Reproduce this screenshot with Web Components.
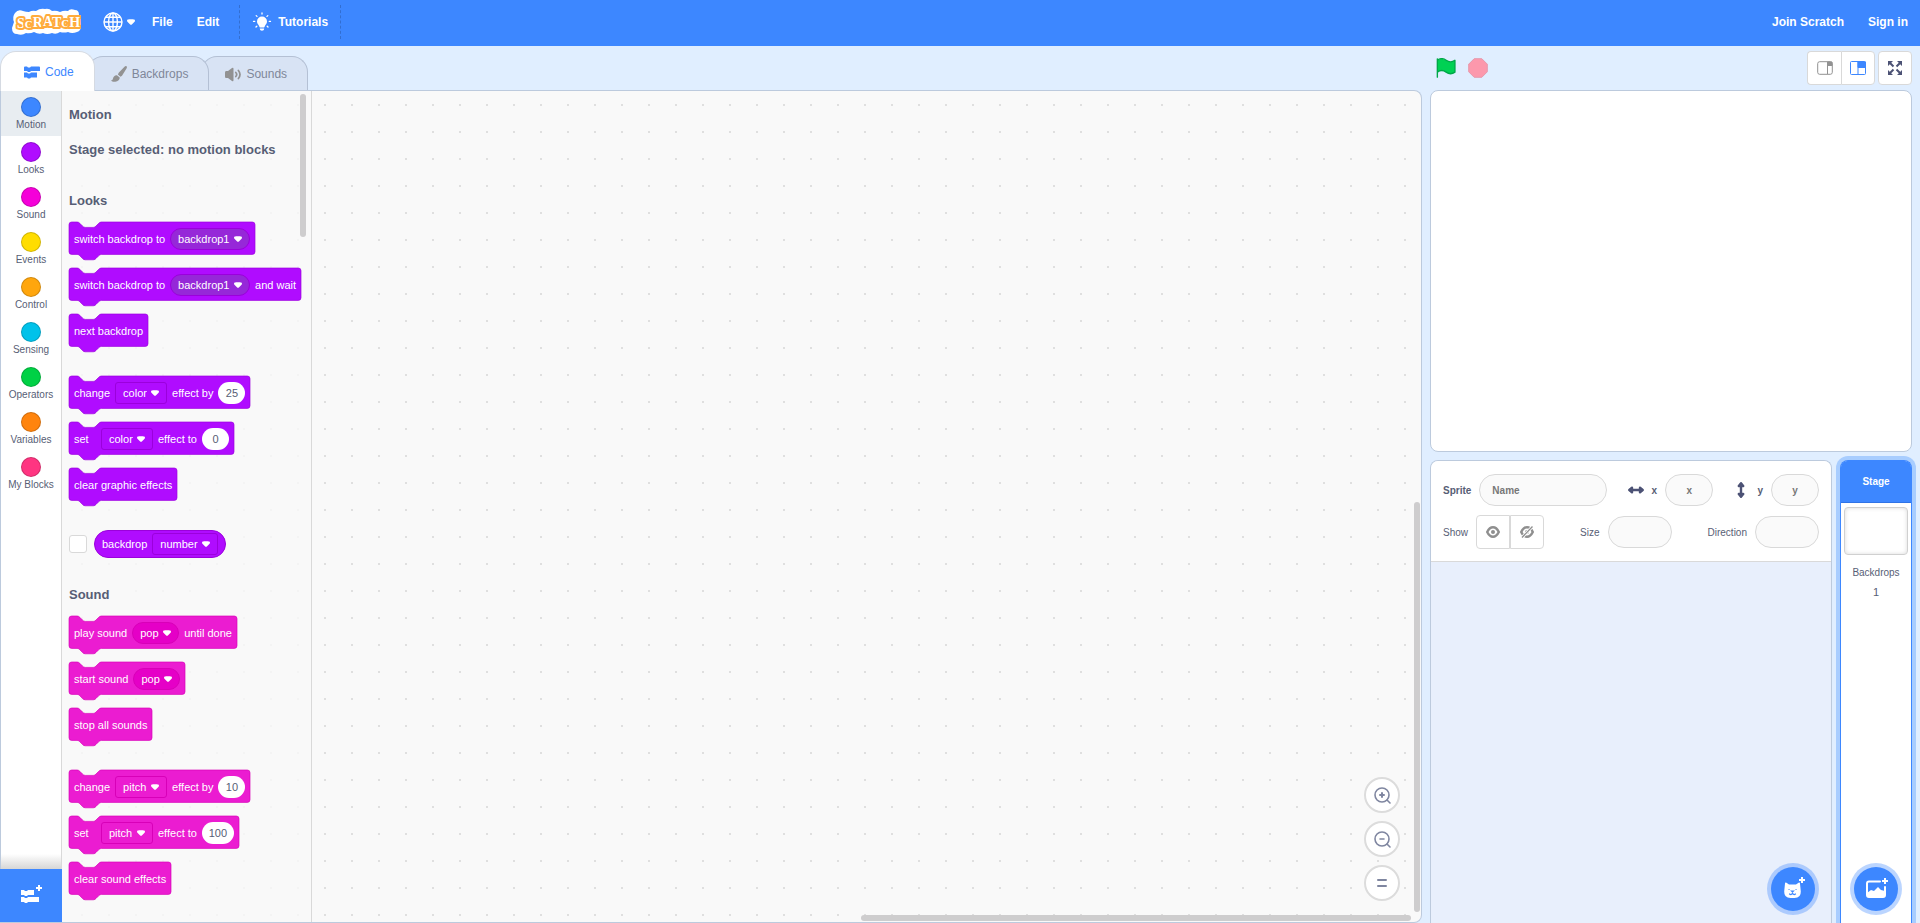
<!DOCTYPE html>
<html lang="en">
<head>
<meta charset="utf-8">
<title>Scratch - Editor</title>
<style>
  :root {
    --blue: #3d87ff;
    --text: #575e75;
    --line: #d9d9d9;
    --edge: #bccadd;
    --pane: #e0eeff;
  }
  body {
    margin: 0;
    font-family: "Liberation Sans", Arial, sans-serif;
    color: var(--text);
  }
</style>
</head>
<body>
<scratch-app></scratch-app>

<script>
const CARET = `<svg class="caret" viewBox="0 0 12.71 8.79" width="8" height="6" fill="#fff" aria-hidden="true"><path d="M12.71,2.44A2.41,2.41,0,0,1,12,4.16L8.08,8.08a2.45,2.45,0,0,1-3.45,0L0.72,4.16A2.42,2.42,0,0,1,0,2.44,2.48,2.48,0,0,1,.71.71C1,0.47,1.43,0,6.36,0S11.75,0.46,12,.71A2.44,2.44,0,0,1,12.71,2.44Z"/></svg>`;

function define(name, html, setup) {
  const template = document.createElement("template");
  template.innerHTML = html;
  customElements.define(name, class extends HTMLElement {
    constructor() {
      super();
      this.attachShadow({ mode: "open" }).appendChild(template.content.cloneNode(true));
    }
    connectedCallback() {
      if (setup) setup(this, this.shadowRoot);
    }
  });
}

/* ---------- blocks ---------- */

define("block-menu", `
  <style>
    :host { display: inline-grid; align-items: center; height: 22px; }
    select {
      grid-area: 1 / 1;
      appearance: none;
      height: 22px;
      margin: 0;
      padding: 0 19px 0 7px;
      border: 1px solid var(--block-line);
      border-radius: 3px;
      background: transparent;
      color: #fff;
      font: 11px "Liberation Sans", Arial, sans-serif;
    }
    :host([round]) select { border-radius: 11px; background: var(--block-field); }
    .caret { grid-area: 1 / 1; justify-self: end; margin-right: 8px; pointer-events: none; }
  </style>
  <select><option></option></select>${CARET}
`, (host, root) => {
  root.querySelector("option").textContent = host.getAttribute("value");
  root.querySelector("select").setAttribute("aria-label", host.getAttribute("value"));
});

define("block-number", `
  <style>
    :host { display: inline-flex; }
    input {
      box-sizing: border-box;
      min-width: 27px;
      height: 22px;
      padding: 0;
      border: 0;
      border-radius: 11px;
      background: #fff;
      color: #575e75;
      text-align: center;
      font: 11px "Liberation Sans", Arial, sans-serif;
    }
  </style>
  <input type="text" aria-label="value">
`, (host, root) => {
  const input = root.querySelector("input");
  input.value = host.getAttribute("value");
  input.style.width = `${input.value.length * 6 + 14}px`;
});

define("stack-block", `
  <style>
    :host {
      position: relative;
      display: flex;
      align-items: center;
      gap: 5px;
      width: max-content;
      height: 33px;
      padding: 0 5px;
      margin-bottom: 13px;
      color: #fff;
      font-size: 11px;
      white-space: nowrap;
    }
    :host([last]) { margin-bottom: 29px; }
    .shape { position: absolute; left: 0; top: 0; overflow: visible; }
    ::slotted(*) { position: relative; }
    ::slotted(span) { min-width: 22px; }
    path { fill: var(--block); stroke: var(--block-line); }
  </style>
  <svg class="shape" height="39" aria-hidden="true"><path transform="scale(.675)"/></svg>
  <slot></slot>
`, (host, root) => {
  const draw = () => {
    // the outline is drawn in block units, 0.675px each
    const right = host.offsetWidth / 0.675 - 4;
    root.querySelector(".shape").setAttribute("width", host.offsetWidth);
    root.querySelector("path").setAttribute("d",
      `m 0,4 A 4,4 0 0,1 4,0 H 12 c 2,0 3,1 4,2 l 4,4 c 1,1 2,2 4,2 h 12 c 2,0 3,-1 4,-2 l 4,-4 c 1,-1 2,-2 4,-2
       H ${right} a 4,4 0 0,1 4,4 v 40 a 4,4 0 0,1 -4,4 H 48 c -2,0 -3,1 -4,2 l -4,4 c -1,1 -2,2 -4,2
       h -12 c -2,0 -3,-1 -4,-2 l -4,-4 c -1,-1 -2,-2 -4,-2 H 4 a 4,4 0 0,1 -4,-4 z`);
  };
  new ResizeObserver(draw).observe(host);
});

define("reporter-block", `
  <style>
    :host { display: flex; align-items: center; gap: 7px; margin-bottom: 29px; }
    input {
      appearance: none;
      box-sizing: border-box;
      width: 18px;
      height: 18px;
      margin: 0;
      border: 1px solid var(--line);
      border-radius: 3px;
      background: #fff;
    }
    .pill {
      display: flex;
      align-items: center;
      gap: 5px;
      box-sizing: border-box;
      height: 28px;
      padding: 0 7px;
      border: 1px solid var(--block-line);
      border-radius: 14px;
      background: var(--block);
      color: #fff;
      font-size: 11px;
    }
  </style>
  <input type="checkbox" aria-label="Show on stage">
  <div class="pill"><slot></slot></div>
`);

define("block-palette", `
  <style>
    :host {
      position: relative;
      display: block;
      flex: none;
      box-sizing: border-box;
      width: 250px;
      padding: 16px 0 0 7px;
      border-right: 1px solid var(--line);
      background: rgba(249, 249, 249, .8);
      overflow: hidden;
    }
    h2 { margin: 0 0 13px; font-size: 13px; line-height: 16px; height: 16px; }
    h2.first { margin-bottom: 19px; }
    h2.note { margin-bottom: 35px; }
    .looks { --block: #b00cff; --block-line: #9b00dc; --block-field: #9628d8; }
    .sound { --block: #eb1cd1; --block-line: #d800b8; --block-field: #e500c7; }
    .bar {
      position: absolute;
      right: 5px;
      top: 3px;
      width: 6px;
      height: 143px;
      border-radius: 3px;
      background: #cecdce;
    }
  </style>
  <h2 class="first">Motion</h2>
  <h2 class="note">Stage selected: no motion blocks</h2>
  <section class="looks">
    <h2>Looks</h2>
    <stack-block><span>switch backdrop to</span><block-menu round value="backdrop1"></block-menu></stack-block>
    <stack-block><span>switch backdrop to</span><block-menu round value="backdrop1"></block-menu><span>and wait</span></stack-block>
    <stack-block last><span>next backdrop</span></stack-block>
    <stack-block><span>change</span><block-menu value="color"></block-menu><span>effect by</span><block-number value="25"></block-number></stack-block>
    <stack-block><span>set</span><block-menu value="color"></block-menu><span>effect to</span><block-number value="0"></block-number></stack-block>
    <stack-block last><span>clear graphic effects</span></stack-block>
    <reporter-block><span>backdrop</span><block-menu value="number"></block-menu></reporter-block>
  </section>
  <section class="sound">
    <h2>Sound</h2>
    <stack-block><span>play sound</span><block-menu round value="pop"></block-menu><span>until done</span></stack-block>
    <stack-block><span>start sound</span><block-menu round value="pop"></block-menu></stack-block>
    <stack-block last><span>stop all sounds</span></stack-block>
    <stack-block><span>change</span><block-menu value="pitch"></block-menu><span>effect by</span><block-number value="10"></block-number></stack-block>
    <stack-block><span>set</span><block-menu value="pitch"></block-menu><span>effect to</span><block-number value="100"></block-number></stack-block>
    <stack-block last><span>clear sound effects</span></stack-block>
  </section>
  <div class="bar"></div>
`);

/* ---------- menu bar ---------- */

define("menu-bar", `
  <style>
    :host { display: flex; height: 46px; background: var(--blue); color: #fff; flex: none; }
    a, button {
      display: flex;
      align-items: center;
      padding: 0 12px 2px;
      border: 0;
      background: none;
      color: #fff;
      font: bold 12px "Liberation Sans", Arial, sans-serif;
      text-decoration: none;
    }
    .logo { padding: 0 10px 2px 12px; }
    .lang { gap: 4px; padding-right: 5px; }
    .tips { gap: 6px; }
    .rule { margin: 5px 0 7px; border-left: 1px dashed rgba(0, 0, 0, .18); }
    .rule.first { margin-left: 8px; }
    .account { display: flex; margin-left: auto; }
    .letters {
      font: bold 14px "Liberation Serif", serif;
      fill: #fff;
      stroke: #ffab3c;
      stroke-width: 4;
      stroke-linejoin: round;
      paint-order: stroke;
    }
    .low { font-size: 11px; }
  </style>
  <a class="logo" href="#" aria-label="Scratch">
    <svg width="69" height="28" viewBox="0 0 69 28">
      <path fill="#fff" d="M3 5Q6 1 11 3Q14 4 17 4Q20 2 24 3Q28 0 33 1Q37 0 40 3Q44 2 48 4Q52 2 56 3Q58 0 63 2Q67 2 67 7L69 18Q69 23 65 24Q60 26 56 24Q52 25 48 24Q44 27 40 25Q35 27 31 25Q27 27 22 24Q18 26 14 25Q10 28 5 26Q0 26 0 20L2 14Q0 9 3 5Z"/>
      <text class="letters" x="5" y="20">S<tspan class="low">C</tspan><tspan dy="-1">R</tspan><tspan dy="-1">A</tspan><tspan dy="1">T</tspan><tspan class="low">C</tspan><tspan dy="0">H</tspan></text>
    </svg>
  </a>
  <button class="lang" aria-label="Language">
    <svg width="20" height="20" viewBox="0 0 20 20" fill="none" stroke="#fff" stroke-width="1.4">
      <circle cx="10" cy="10" r="9"/><ellipse cx="10" cy="10" rx="4.4" ry="9"/>
      <path d="M10 1v18M1 10h18M2.5 5.2h15M2.5 14.8h15"/>
    </svg>
    ${CARET}
  </button>
  <button>File</button>
  <button>Edit</button>
  <span class="rule first"></span>
  <button class="tips">
    <svg width="20" height="20" viewBox="0 0 20 20" fill="#fff">
      <path d="M10 4.6a5 5 0 0 1 5 5c0 2.2-1.5 3-2.2 4.6-.3.8-.5 1.3-1.3 1.3h-3c-.8 0-1-.5-1.3-1.3C6.5 12.600 5 11.800 5 9.600a5 5 0 0 1 5-5z"/>
      <path d="M7.800 16.600h4.400c0 3-4.400 3-4.400 0z"/>
      <path fill="none" stroke="#fff" stroke-width="1.3" stroke-linecap="round" d="M10 1v1M4.200 3.600l.8.8M15.800 3.600l-.8.8M1.500 9.400h1.200M17.300 9.400h1.200M4 15l.8-.8M16 15l-.8-.8"/>
    </svg>
    Tutorials
  </button>
  <span class="rule"></span>
  <div class="account"><a href="#">Join Scratch</a><a href="#">Sign in</a></div>
`);

/* ---------- tabs ---------- */

define("editor-tab", `
  <style>
    :host { display: flex; height: 34px; margin-left: -8px; position: relative; }
    button {
      display: flex;
      align-items: center;
      gap: 5px;
      padding: 0 20px 0 23px;
      border: 1px solid #b4c0d4;
      border-bottom: 0;
      border-radius: 16px 16px 0 0;
      background: #d8e3f4;
      color: #7f8799;
      font: 12px "Liberation Sans", Arial, sans-serif;
    }
    :host([active]) { height: 40px; margin-left: 0; margin-bottom: -1px; }
    :host([active]) button { border-color: #d5dae2; background: #fff; color: var(--blue); }
  </style>
  <button role="tab"><slot name="icon"></slot><slot></slot></button>
`);

/* ---------- categories ---------- */

define("category-item", `
  <style>
    :host { display: block; }
    button {
      display: flex;
      flex-direction: column;
      align-items: center;
      gap: 2px;
      width: 100%;
      height: 45px;
      padding: 6px 0 0;
      border: 0;
      background: none;
      color: var(--text);
      font: 10px/11px "Liberation Sans", Arial, sans-serif;
      white-space: nowrap;
    }
    :host([active]) button { background: #e8edf1; }
    i { box-sizing: border-box; flex: none; width: 20px; height: 20px; border-radius: 50%; border: 1px solid rgba(0, 0, 0, .18); }
  </style>
  <button><i></i><slot></slot></button>
`, (host, root) => {
  root.querySelector("i").style.background = host.getAttribute("color");
});

define("category-list", `
  <style>
    :host {
      display: flex;
      flex-direction: column;
      flex: none;
      width: 60px;
      border-left: 1px solid var(--edge);
      border-right: 1px solid var(--line);
      background: #fff;
    }
    .fade { height: 15px; margin-top: auto; background: linear-gradient(#fff, #d6d6d6); }
    .add {
      position: relative;
      display: flex;
      align-items: center;
      justify-content: center;
      height: 53px;
      padding: 0 0 4px;
      margin: 0 -1px;
      border: 0;
      background: var(--blue);
    }
  </style>
  <category-item active color="#3d87ff">Motion</category-item>
  <category-item color="#b00cff">Looks</category-item>
  <category-item color="#f500d9">Sound</category-item>
  <category-item color="#ffdd00">Events</category-item>
  <category-item color="#ffa60d">Control</category-item>
  <category-item color="#00c2ea">Sensing</category-item>
  <category-item color="#00d145">Operators</category-item>
  <category-item color="#ff840d">Variables</category-item>
  <category-item color="#ff3581">My Blocks</category-item>
  <div class="fade"></div>
  <button class="add" aria-label="Add Extension">
    <svg width="22" height="20" viewBox="0 0 22 20" fill="#fff">
      <path d="M1 6h3l1 1h2l1-1h6v5H8l-1 1H5l-1-1H1zM1 13h3l1 1h2l1-1h11v5H8l-1 1H5l-1-1H1zM18 1h2v2h2v2h-2v2h-2V5h-2V3h2z"/>
    </svg>
  </button>
`);

/* ---------- code area ---------- */

define("code-area", `
  <style>
    :host { position: relative; display: block; flex: 1; }
    .zoom { position: absolute; right: 21px; bottom: 21px; display: grid; gap: 8px; }
    button {
      display: grid;
      place-items: center;
      box-sizing: border-box;
      width: 36px;
      height: 36px;
      padding: 0;
      border: 2px solid #dcdcdc;
      border-radius: 50%;
      background: #fff;
    }
    svg { fill: none; stroke: #7f86a0; stroke-width: 1.6; stroke-linecap: round; }
    .bar { position: absolute; border-radius: 3px; background: #cecdce; }
    .down { right: 1px; top: calc(50% - 5px); bottom: 10px; width: 6px; }
    .across { right: 10px; bottom: 1px; width: 550px; height: 6px; }
  </style>
  <div class="zoom">
    <button aria-label="Zoom in"><svg width="20" height="20" viewBox="0 0 20 20"><circle cx="10" cy="10" r="7"/><path stroke-width="2" d="M10 8v4M8 10h4"/><path d="M15 15l3 3"/></svg></button>
    <button aria-label="Zoom out"><svg width="20" height="20" viewBox="0 0 20 20"><circle cx="10" cy="10" r="7"/><path d="M8 10h4M15 15l3 3"/></svg></button>
    <button aria-label="Reset zoom"><svg width="20" height="20" viewBox="0 0 20 20"><path stroke-width="2" d="M6 7h8M6 13h8"/></svg></button>
  </div>
  <div class="bar down"></div>
  <div class="bar across"></div>
`);

define("code-editor", `
  <style>
    :host { display: flex; flex-direction: column; flex: 1; min-width: 0; padding-top: 5px; }
    .tabs { display: flex; align-items: flex-end; height: 39px; }
    .tabs editor-tab:nth-child(1) { z-index: 3; }
    .tabs editor-tab:nth-child(2) { z-index: 2; }
    .body {
      display: flex;
      flex: 1;
      border: 1px solid var(--edge);
      border-left: 0;
      border-radius: 0 8px 8px 0;
      overflow: hidden;
      background: radial-gradient(circle at 14px 14px, #dfdfdf 1px, transparent 1px) 14px 0 / 27px 27px #f9f9f9;
    }
  </style>
  <div class="tabs" role="tablist">
    <editor-tab active>
      <svg slot="icon" width="16" height="16" viewBox="0 0 16 16" fill="#3d87ff"><path d="M0 3.500q0-1 1-1h2l1 1h2l1-1h8q1 0 1 1v3.500H7L6 8H4L3 7H0zM0 8.500h3l1 1h2l1-1h6v5H7l-1 1H4l-1-1H0z"/></svg>Code
    </editor-tab>
    <editor-tab>
      <svg slot="icon" width="16" height="16" viewBox="0 0 16 16" fill="#929292"><path d="M15.500.3c.7.6.4 1.500 0 2.200L11 9.800l-1.500 1-2.600-2.300.8-1.700L13.500.7c.7-.6 1.400-.9 2-.4zM6 9.300l2.700 2.300c.2 3-3 4.200-5.200 4.200-1.500 0-3-.5-3.500-1.500 1 .2 1.500-.3 1.900-1.500C2.500 10.500 4 9 6 9.300z"/></svg>Backdrops
    </editor-tab>
    <editor-tab>
      <svg slot="icon" width="16" height="16" viewBox="0 0 16 16" fill="#929292"><path d="M0 6.500q0-1.500 1-1.500h2l4-3q1.500-1 1.500 1v11q0 2-1.500 1l-4-3H1q-1 0-1-1.500z"/><path fill="none" stroke="#929292" stroke-width="1.700" stroke-linecap="round" d="M10.800 6.500q1.800 2 0 4M13.400 4.500q3.200 4 0 8"/></svg>Sounds
    </editor-tab>
  </div>
  <div class="body">
    <category-list></category-list>
    <block-palette></block-palette>
    <code-area></code-area>
  </div>
`);

/* ---------- stage ---------- */

define("stage-view", `
  <style>
    :host { display: block; }
    .head { display: flex; align-items: center; height: 44px; padding: 0 0 0 6px; }
    button { display: grid; place-items: center; box-sizing: border-box; padding: 0; border: 0; background: none; }
    .run { width: 20px; height: 20px; margin-right: 12px; }
    .size { width: 34px; height: 34px; border: 1px solid var(--line); background: #fff; }
    .small { margin-left: auto; border-right: 0; border-radius: 4px 0 0 4px; }
    .large { border-radius: 0 4px 4px 0; }
    .full { margin-left: 3px; border-radius: 4px; }
    .canvas { height: 360px; border: 1px solid var(--edge); border-radius: 8px; background: #fff; }
  </style>
  <div class="head">
    <button class="run" aria-label="Go"><svg width="20" height="20" viewBox="0 0 16.63 17.5" fill="#00d153" stroke="#00a848" stroke-width="1.2" stroke-linecap="round" stroke-linejoin="round"><path d="M.75 2A6.44 6.44 0 0 1 8.44 2a6.44 6.44 0 0 0 7.69 0V12.4a6.44 6.44 0 0 1-7.69 0 6.44 6.44 0 0 0-7.69 0M.75 16.75V.75"/></svg></button>
    <button class="run" aria-label="Stop"><svg width="20" height="20" viewBox="0 0 14 14" fill="#fc98ac" stroke="#e698ab" stroke-width=".7"><path d="M4.3.5h5.400l3.800 3.800v5.400l-3.800 3.800H4.300L.5 9.700V4.300z"/></svg></button>
    <button class="size small" aria-label="Small stage"><svg width="16" height="14" viewBox="0 0 16 14" fill="none" stroke="#929292"><rect x=".7" y=".7" width="14.600" height="12.600" rx="2"/><path d="M10.500 1v12"/><path fill="#929292" d="M10.500 1h4.500v3.500h-4.500z"/></svg></button>
    <button class="size large" aria-label="Large stage"><svg width="16" height="14" viewBox="0 0 16 14" fill="none" stroke="#3d87ff"><rect x=".5" y=".5" width="15" height="13" rx="1"/><path d="M8 1v12"/><path fill="#3d87ff" d="M8 1h7.500v5.500H8z"/></svg></button>
    <button class="size full" aria-label="Full screen"><svg width="14" height="14" viewBox="0 0 14 14" fill="#4c5275" stroke="#4c5275"><path stroke-width="2" d="M2 2l3.500 3.500M12 2L8.500 5.500M2 12l3.500-3.500M12 12L8.500 8.500"/><path stroke="none" d="M0 0h5L0 5zM14 0v5L9 0zM0 14V9L5 14zM14 14H9L14 9z"/></svg></button>
  </div>
  <div class="canvas"></div>
`);

define("add-button", `
  <style>
    :host { display: block; }
    button {
      display: grid;
      place-items: center;
      width: 44px;
      height: 44px;
      padding: 0;
      border: 0;
      border-radius: 50%;
      background: var(--blue);
      box-shadow: 0 0 0 4px rgba(61, 135, 255, .35);
    }
  </style>
  <button><slot></slot></button>
`, (host, root) => {
  root.querySelector("button").setAttribute("aria-label", host.getAttribute("label"));
});

define("sprite-pane", `
  <style>
    :host {
      position: relative;
      display: block;
      flex: 1;
      border: 1px solid var(--edge);
      border-bottom: 0;
      border-radius: 8px 8px 0 0;
      overflow: hidden;
      background: #e8effc;
    }
    .info { display: grid; gap: 8px; padding: 12px; border-bottom: 1px solid var(--line); background: #fff; }
    .row { display: flex; justify-content: space-between; height: 34px; }
    .group { display: flex; align-items: center; gap: 8px; font-size: 10px; }
    .strong { font-weight: bold; }
    input {
      box-sizing: border-box;
      width: 48px;
      height: 32px;
      padding: 0;
      border: 1px solid var(--line);
      border-radius: 16px;
      background: #fafafa;
      color: var(--text);
      text-align: center;
      font: bold 10px "Liberation Sans", Arial, sans-serif;
    }
    input::placeholder { color: #777; opacity: 1; }
    .name { width: 128px; padding-left: 12px; text-align: left; }
    .mid { width: 64px; }
    .eyes { display: flex; }
    .eyes button {
      display: grid;
      place-items: center;
      box-sizing: border-box;
      width: 34px;
      height: 34px;
      padding: 0;
      border: 1px solid var(--line);
      border-radius: 4px 0 0 4px;
      background: #fff;
    }
    .eyes button + button { border-radius: 0 4px 4px 0; }
    add-button { position: absolute; right: 16px; bottom: 12px; }
  </style>
  <div class="info">
    <div class="row">
      <div class="group strong"><label for="name">Sprite</label><input id="name" class="name" placeholder="Name"></div>
      <div class="group strong">
        <svg width="16" height="12" viewBox="0 0 16 12" fill="none" stroke="#4c5275" stroke-width="2.4" stroke-linecap="round" stroke-linejoin="round"><path d="M2 6h12"/><path fill="#4c5275" d="M4 3.800L1.300 6 4 8.200zM12 3.800L14.700 6 12 8.200z"/></svg>
        <label for="x">x</label><input id="x" placeholder="x">
      </div>
      <div class="group strong">
        <svg width="16" height="16" viewBox="-2 0 16 16" fill="none" stroke="#4c5275" stroke-width="2.4" stroke-linecap="round" stroke-linejoin="round"><path d="M6 2v12"/><path fill="#4c5275" d="M3.800 4L6 1.300 8.200 4zM3.800 12L6 14.700 8.200 12z"/></svg>
        <label for="y">y</label><input id="y" placeholder="y">
      </div>
    </div>
    <div class="row">
      <div class="group"><span>Show</span>
        <div class="eyes">
          <button aria-label="Show sprite"><svg width="14" height="12" viewBox="0 0 14 12" fill="none" stroke="#8f8f8f" stroke-width="2.4"><path d="M1.200 6q2.300-4.800 5.800-4.800t5.800 4.800q-2.300 4.800-5.800 4.800T1.200 6z"/><circle cx="7" cy="6" r="2" fill="#8f8f8f" stroke="none"/></svg></button>
          <button aria-label="Hide sprite"><svg width="14" height="12" viewBox="0 0 14 12" fill="none" stroke="#8f8f8f" stroke-width="2.4"><path d="M1.200 6q2.300-4.800 5.800-4.800t5.800 4.800q-2.300 4.800-5.800 4.800T1.200 6z"/><circle cx="7" cy="6" r="2" fill="#8f8f8f" stroke="none"/><path stroke="#fff" stroke-width="3" d="M2 11.500L12.500.5"/><path stroke-width="1.3" d="M2 11.500L12.500.5"/></svg></button>
        </div>
      </div>
      <div class="group"><label for="size">Size</label><input id="size" class="mid"></div>
      <div class="group"><label for="direction">Direction</label><input id="direction" class="mid"></div>
    </div>
  </div>
  <add-button label="Choose a Sprite">
    <svg width="24" height="24" viewBox="0 0 24 24" fill="#fff"><path d="M4 6.500q0-1.500 1.500-.8L8 7.600h7l2.500-1.900Q19 5 19 6.500l.8 8q.2 6.500-6.300 6.500h-4Q3 21 3.200 14.500z"/><path d="M20 0h2v2h2v2h-2v2h-2V4h-2V2h2z"/><path fill="none" stroke="#3d87ff" stroke-width="1.200" stroke-linecap="round" d="M8 12.500h.1M15 12.500h.1M10.500 14h2l-1 1zM8.500 17q2 1.500 3-1 1 2.500 3 1"/></svg>
  </add-button>
`);

define("stage-selector", `
  <style>
    :host {
      position: relative;
      display: flex;
      flex-direction: column;
      align-items: center;
      box-sizing: border-box;
      width: 72px;
      border: 1px solid var(--blue);
      border-bottom: 0;
      border-radius: 8px 8px 0 0;
      background: #fff;
      box-shadow: 0 0 0 4px #a8cdff;
      font-size: 10px;
    }
    .head {
      align-self: stretch;
      box-sizing: border-box;
      height: 42px;
      border-bottom: 1px solid #2f73e6;
      border-radius: 6px 6px 0 0;
      background: var(--blue);
      color: #fff;
      font-weight: bold;
      line-height: 42px;
      text-align: center;
    }
    .thumb {
      box-sizing: border-box;
      width: 64px;
      height: 48px;
      margin: 4px 0 12px;
      border: 1px solid #d0d0d0;
      border-radius: 4px;
      box-shadow: inset 0 0 4px rgba(0, 0, 0, .15);
    }
    .count { margin-top: 8px; font-size: 11px; }
    add-button { position: absolute; bottom: 12px; }
  </style>
  <div class="head">Stage</div>
  <div class="thumb"></div>
  <div>Backdrops</div>
  <div class="count">1</div>
  <add-button label="Choose a Backdrop">
    <svg width="24" height="24" viewBox="0 0 24 24" fill="none"><path stroke="#fff" stroke-width="2" stroke-linecap="round" d="M16 4.500H5Q3 4.500 3 6.500V18q0 2 2 2h14q2 0 2-2v-8"/><path fill="#fff" d="M3 16l4-3 3 1 4-4 3 3 4 1v6H3zM20 1h2v2h2v2h-2v2h-2V5h-2V3h2z"/></svg>
  </add-button>
`);

define("scratch-app", `
  <style>
    :host { display: flex; flex-direction: column; height: 100vh; overflow: hidden; background: var(--pane); }
    main { display: flex; flex: 1; gap: 8px; min-height: 0; padding-right: 8px; }
    aside { display: flex; flex-direction: column; flex: none; width: 482px; }
    .targets { display: flex; flex: 1; gap: 8px; margin-top: 8px; }
  </style>
  <menu-bar></menu-bar>
  <main>
    <code-editor></code-editor>
    <aside>
      <stage-view></stage-view>
      <div class="targets">
        <sprite-pane></sprite-pane>
        <stage-selector></stage-selector>
      </div>
    </aside>
  </main>
`);
</script>
</body>
</html>
